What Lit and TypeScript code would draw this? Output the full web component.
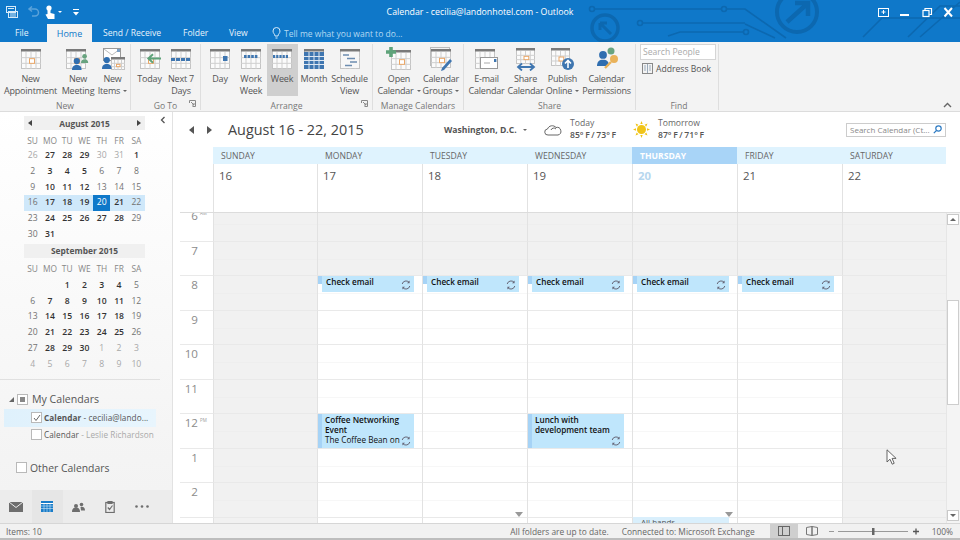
import { LitElement, html, css, svg, nothing } from "lit";
import { customElement } from "lit/decorators.js";

const G = "#7a7a7a";
const calBase = (orange = true, x = 0, y = 0, w = 20, h = 20) => {
  const cw = w / 4, rh = (h - 3) / 3;
  return svg`<g transform="translate(${x} ${y})">
    <rect x="0.5" y="0.5" width="${w - 1}" height="${h - 1}" fill="#fbfbfb" stroke="#c4c4c4"/>
    <rect x="0" y="0" width="${w}" height="2.5" fill="${G}"/>
    ${[1, 2, 3].map((i) => svg`<path d="M${i * cw} 3V${h}" stroke="#cfcfcf"/>`)}
    ${[1, 2].map((i) => svg`<path d="M0 ${3 + i * rh}H${w}" stroke="#cfcfcf"/>`)}
    ${orange ? svg`<rect x="${cw * 2 - 1.5}" y="${3 + rh + 1}" width="${cw}" height="${rh - 1}" fill="#fff" stroke="#eaa768"/>` : nothing}
  </g>`;
};
const person = (x: number, y: number, c: string, s = 1) => svg`<g transform="translate(${x} ${y}) scale(${s})" fill="${c}"><circle cx="4" cy="2.6" r="2.6"/><path d="M0 10c0-3 1.5-4.2 4-4.2S8 7 8 10z"/></g>`;
const weekBars = (x: number, y: number, n: number, w: number) => svg`${Array.from({ length: n }, (_, i) => svg`<rect x="${x + i * (w + 1)}" y="${y}" width="${w}" height="3" fill="#3f76b0"/>`)}`;
const wrap = (c: unknown, w = 30, h = 24) => html`<svg width="${w}" height="${h}" viewBox="0 0 ${w} ${h}">${c}</svg>`;

const icons: Record<string, unknown> = {
  appt: wrap(svg`${calBase(true, 5, 2)}`),
  meeting: wrap(svg`${calBase(true, 3, 2)}${person(18, 7, "#68a37f", 0.9)}${person(9, 11, "#2f6eb0", 1.2)}`),
  items: wrap(svg`<rect x="5.5" y="1.5" width="17" height="12" fill="#fff" stroke="#999"/><path d="M6 2l8 6 8-6" fill="none" stroke="#bbb"/><rect x="19" y="2" width="3" height="3" fill="#7b9fc4"/>${calBase(true, 13, 10, 14, 13)}${person(4, 10, "#2f6eb0", 1.2)}`),
  today: wrap(svg`${calBase(true, 5, 2)}<path d="M26 11.5H14m4-4.2l-4.6 4.2 4.6 4.2" fill="none" stroke="#5fa37a" stroke-width="2"/>`),
  next7: wrap(svg`${calBase(false, 5, 2)}${weekBars(5, 11, 4, 4)}`),
  day: wrap(svg`${calBase(false, 5, 2)}<rect x="18" y="9" width="4.5" height="5" fill="#3f76b0"/>`),
  work: wrap(svg`${calBase(false, 5, 2)}${weekBars(8, 8, 4, 2.6)}`),
  week: wrap(svg`${calBase(false, 5, 2)}${weekBars(6, 8, 5, 2.2)}`),
  month: wrap(svg`${calBase(false, 5, 2)}<g fill="#3f76b0"><rect x="5" y="5" width="20" height="17"/></g><path d="M5 9.5H25M5 13.5H25M5 17.5H25M10 5V22M15 5V22M20 5V22" stroke="#dfe8f2"/>`),
  sched: wrap(svg`${calBase(false, 5, 2)}<rect x="6" y="5" width="18" height="16" fill="#f7f7f7"/><path d="M8 8h6M12 11.5h8M15 15h7M10 18.5h7" stroke="#6d8db0" stroke-width="1.4"/>`),
  open: wrap(svg`${calBase(true, 7, 3)}<path d="M7 0v10M2 5h10" stroke="#5fa37a" stroke-width="3.6"/>`),
  groups: wrap(svg`<rect x="4.5" y="0.5" width="19" height="18" fill="#f1f1f1" stroke="#bbb"/>${calBase(true, 5, 2, 20, 19)}<path d="M16 21l8-9 2 2-8 9-3 1z" fill="#3f76b0"/>`),
  email: wrap(svg`${calBase(false, 3, 2)}<rect x="8.5" y="10.5" width="17" height="11" fill="#fff" stroke="#999"/><path d="M12 16h6" stroke="#aaa"/><rect x="22" y="12" width="2.4" height="3" fill="#3f76b0"/>`),
  share: wrap(svg`${calBase(true, 5, 1, 19, 16)}<path d="M7 20h16M11 16.5L7 20l4 3.5M19 16.5l4 3.5-4 3.5" fill="none" stroke="#3f76b0" stroke-width="1.8"/>`),
  publish: wrap(svg`${calBase(true, 3, 1, 19, 18)}<circle cx="20" cy="17" r="6" fill="#3f76b0"/><path d="M20 21v-7M17 16.5l3-3 3 3" fill="none" stroke="#fff" stroke-width="1.6"/>`),
  perms: wrap(svg`<circle cx="19" cy="4" r="3.5" fill="#68a37f"/>${person(5, 4, "#2f6eb0", 1.5)}<path d="M13 21l6-6" stroke="#e9b25a" stroke-width="2.4"/><circle cx="22" cy="12" r="4" fill="#e9b25a"/>`),
};

const btn = (ic: string, a: string, b: string, w: number, opts: { caret?: boolean; on?: boolean } = {}) => ({ ic, a, b, w, ...opts });
const groups = [
  { label: "New", w: 131, launcher: false, items: [btn("appt", "New", "Appointment", 60), btn("meeting", "New", "Meeting", 35), btn("items", "New", "Items", 34, { caret: true })] },
  { label: "Go To", w: 70, launcher: true, items: [btn("today", "Today", "", 31), btn("next7", "Next 7", "Days", 32)] },
  { label: "Arrange", w: 172, launcher: true, items: [btn("day", "Day", "", 31), btn("work", "Work", "Week", 31), btn("week", "Week", "", 31, { on: true }), btn("month", "Month", "", 33), btn("sched", "Schedule", "View", 38)] },
  { label: "Manage Calendars", w: 91, launcher: false, items: [btn("open", "Open", "Calendar", 46, { caret: true }), btn("groups", "Calendar", "Groups", 38, { caret: true })] },
  { label: "Share", w: 172, launcher: false, items: [btn("email", "E-mail", "Calendar", 40), btn("share", "Share", "Calendar", 38), btn("publish", "Publish", "Online", 36, { caret: true }), btn("perms", "Calendar", "Permissions", 52)] },
];

const sync = (c = "#667") => html`<svg class="sync" width="10" height="10" viewBox="0 0 10 10"><path d="M1.2 4A4 4 0 0 1 8 2.2M8.8 6A4 4 0 0 1 2 7.8" fill="none" stroke="${c}" stroke-width="1"/><path d="M8.6 .6v2.6H6zM1.4 9.4V6.8H4z" fill="${c}"/></svg>`;

const aug = [[26,27,28,29,30,31,1],[2,3,4,5,6,7,8],[9,10,11,12,13,14,15],[16,17,18,19,20,21,22],[23,24,25,26,27,28,29],[30,31,0,0,0,0,0]];
const sep = [[0,0,1,2,3,4,5],[6,7,8,9,10,11,12],[13,14,15,16,17,18,19],[20,21,22,23,24,25,26],[27,28,29,30,1,2,3],[4,5,6,7,8,9,10]];
const augBold = new Set(["0:1","0:2","0:3","0:6","1:1","1:2","1:3","2:1","2:2","2:3","3:1","3:2","3:3","3:5","4:1","4:2","4:3","4:4","4:5","5:1"]);
const sepBold = new Set(["0:2","0:3","0:4","0:5","1:1","1:2","1:3","1:4","1:5","2:1","2:2","2:3","2:4","2:5","3:1","3:2","3:3","3:4","3:5","4:1","4:2","4:3"]);
const augLight = new Set(["0:0","0:4","0:5"]);
const sepLight = new Set(["4:4","4:5","4:6","5:0","5:1","5:2","5:3","5:4","5:5","5:6"]);
const hdr = ["SU","MO","TU","WE","TH","FR","SA"];
const days = ["SUNDAY","MONDAY","TUESDAY","WEDNESDAY","THURSDAY","FRIDAY","SATURDAY"];
const hours = [["6","AM"],["7",""],["8",""],["9",""],["10",""],["11",""],["12","PM"],["1",""],["2",""],["3",""]];

@customElement("app-root")
export class AppRoot extends LitElement {
  static styles = css`
    :host { display: block; width: 960px; height: 540px; overflow: hidden; font-family: "Open Sans", "Noto Sans", sans-serif; color: #444; background: #fff; }
    .app { position: relative; width: 960px; height: 540px; display: flex; flex-direction: column; }
    .cursor { position: absolute; left: 886px; top: 449px; z-index: 5; }
    .top { position: relative; height: 42px; background: #0f78c9; flex: none; color: #fff; }
    .circuit { position: absolute; inset: 0; }
    .tbar { position: relative; height: 24px; display: grid; grid-template-columns: 1fr auto 1fr; align-items: center; font-size: 8.8px; }
    .qat { display: flex; align-items: center; padding-left: 5px; gap: 4px; }
    .qat .undo { margin-left: 3px; }
    .qat .c1 { border-top-color: #fff; margin-left: -2px; }
    .qat .gap { width: 3px; }
    .win { display: flex; justify-content: flex-end; align-items: center; gap: 8px; padding-right: 5px; }
    .win .m1 { margin-left: 1px; }
    .tabs { position: relative; height: 18px; display: flex; font-size: 8.6px; align-items: center; white-space: nowrap; }
    .tab { height: 18px; line-height: 19px; color: #e8f3fb; }
    .tab.file { width: 32px; padding-left: 15px; box-sizing: border-box; }
    .tab.active { background: #f3f3f3; color: #0f78c9; width: 45px; margin-left: 15px; text-align: center; font-size: 9px; }
    .tab.sr { margin-left: 11px; width: 58px; }
    .tab.fo { margin-left: 22px; width: 25px; }
    .tab.vi { margin-left: 21px; width: 19px; }
    .tell { color: #b4d8f2; margin-left: 24px; display: flex; align-items: center; gap: 3px; font-size: 8.5px; }
    .ribbon { flex: none; display: flex; background: #f3f3f3; border-bottom: 1px solid #dcdcdc; position: relative; box-sizing: border-box; height: 70px; padding-top: 2px; }
    .grp { display: flex; flex-direction: column; border-right: 1px solid #dedede; height: 66px; box-sizing: border-box; position: relative; flex: none; }
    .row { display: flex; height: 52px; justify-content: center; flex: none; }
    .rb { display: flex; flex-direction: column; align-items: center; font-size: 9px; letter-spacing: -.2px; line-height: 12px; color: #555; height: 52px; flex: none; white-space: nowrap; }
    .rb.on { background: #cfcfcf; }
    .rb svg { margin: 3px 0 2px; flex: none; }
    .rb span { height: 12px; display: block; }
    .caret { display: inline-block; width: 0; height: 0; border: 2px solid transparent; border-top: 2.5px solid #666; border-bottom: 0; margin-left: 3px; vertical-align: 2px; }
    .glabel { font-size: 8.6px; color: #777; text-align: center; margin-top: 4px; line-height: 12px; flex: none; white-space: nowrap; }
    .launch { position: absolute; right: 4px; bottom: 3px; }
    .find { width: 83px; padding-left: 4px; box-sizing: border-box; }
    .sp { width: 76px; height: 16px; background: #fff; border: 1px solid #d5d5d5; box-sizing: border-box; font-size: 8.6px; color: #aaa; padding-left: 2px; line-height: 14px; }
    .ab { display: flex; align-items: center; gap: 2px; font-size: 8.6px; margin: 0 0 0 2px; color: #555; height: 17px; }
    .find .body { height: 52px; flex: none; }
    .collapse { position: absolute; right: 8px; bottom: 2px; }
    .main { flex: 1; display: flex; min-height: 0; }
    .side { width: 173px; flex: none; box-sizing: border-box; border-right: 1px solid #e2e2e2; background: linear-gradient(#fff, #f2f2f2); display: flex; flex-direction: column; position: relative; }
    .sidechev { position: absolute; left: 160px; top: 4px; }
    .mini { margin: 4px 0 0 24px; width: 121px; }
    .mh { height: 14px; background: #f0f0f0; display: flex; justify-content: space-between; align-items: center; font-size: 8.4px; font-weight: 700; color: #555; padding: 0 4px; box-sizing: border-box; }
    .mh b { flex: 1; text-align: center; font-weight: 700; }
    .tri { width: 0; height: 0; border: 3px solid transparent; }
    .tri.l { border-right: 4px solid #444; border-left: 0; }
    .tri.r { border-left: 4px solid #444; border-right: 0; }
    .mg { display: grid; grid-template-columns: repeat(7, 1fr); font-size: 8.6px; text-align: center; color: #727272; }
    .mg.dow { height: 17px; line-height: 21px; color: #888; font-size: 8.4px; margin-bottom: 1px; }
    .mg.wk { height: 15.8px; line-height: 15.8px; }
    .mg.wk.hl { background: #cfe8fa; }
    .mg b { color: #333; font-weight: 600; }
    .mg i { font-style: normal; color: #a8a8a8; }
    .mg .sel { background: #0f78c9; color: #fff; }
    .sep2 { margin-top: 1px; }
    .sep2 .mg.dow { margin-bottom: 3px; }
    .divi { border-top: 1px solid #e0e0e0; margin: 6px 12px 0 0; }
    .cals { margin-top: 11px; font-size: 10.6px; color: #555; flex: 1; }
    .ch { display: flex; align-items: center; height: 17px; }
    .ch .nm { margin-left: 4px; }
    .exp { width: 0; height: 0; border-left: 5px solid transparent; border-bottom: 5px solid #666; margin: 0 3px 0 9px; }
    .cb { width: 9px; height: 9px; border: 1px solid #b9b9b9; background: #fff; flex: none; display: flex; align-items: center; justify-content: center; }
    .cb.mix::after { content: ""; width: 5px; height: 5px; background: #888; }
    .citem { display: flex; align-items: center; height: 18px; margin-left: 4px; width: 152px; padding-left: 27px; box-sizing: border-box; font-size: 8.2px; letter-spacing: .08px; color: #555; gap: 2px; white-space: nowrap; }
    .citem.on { background: linear-gradient(90deg, #dff1fc, #e8f5fd); margin-top: 1px; }
    .citem.off { margin-top: -1px; }
    .citem b { font-weight: 700; }
    .citem .c2 { font-weight: 400; }
    .citem em { font-style: normal; color: #a9a9a9; }
    .other { display: flex; align-items: center; gap: 3px; margin: 17px 0 0 16px; font-size: 10.4px; }
    .nav { height: 33px; background: #ececec; display: flex; align-items: center; flex: none; }
    .nb { width: 31.5px; height: 33px; display: flex; align-items: center; justify-content: center; flex: none; }
    .nb.on { background: #e6e6e6; }
    .cal { flex: 1; display: flex; min-width: 0; padding-left: 7px; }
    .calin { flex: 1; min-width: 0; display: flex; flex-direction: column; }
    .chead { height: 35px; flex: none; display: flex; align-items: center; }
    .arrows { display: flex; gap: 13px; margin: 0 16px 0 9px; align-items: center; }
    .arrows .tri { border-width: 4px; }
    .arrows .tri.l { border-right: 5px solid #555; border-left: 0; }
    .arrows .tri.r { border-left: 5px solid #555; border-right: 0; }
    .ttl { font-size: 14.4px; color: #444; width: 216px; white-space: nowrap; }
    .loc { font-size: 8.6px; font-weight: 700; color: #555; width: 100px; white-space: nowrap; display: flex; align-items: center; }
    .loc .caret { margin-left: 6px; vertical-align: 0; }
    .wx { display: flex; align-items: center; gap: 8px; width: 89px; font-size: 8.6px; line-height: 11.5px; color: #666; white-space: nowrap; flex: none; }
    .wx.tm2 { width: 213px; }
    .wx b { display: block; font-weight: 600; color: #555; word-spacing: -.6px; }
    .search { width: 100px; height: 14px; border: 1px solid #ccc; box-sizing: border-box; font-size: 8px; color: #888; display: flex; align-items: center; justify-content: space-between; padding: 0 3px; white-space: nowrap; flex: none; }
    .wk7 { display: grid; grid-template-columns: 33px 104px repeat(5, 105px) 104px; flex: none; }
    .dn { background: #dff3fe; height: 17px; font-size: 8.6px; line-height: 18px; padding-left: 8px; color: #666; }
    .dn.today { background: #a8d4f7; color: #fff; font-weight: 700; }
    .dd { height: 48px; font-size: 11.4px; padding: 4px 0 0 5px; box-sizing: border-box; border-left: 1px solid #e2e2e2; color: #555; }
    .dd.today { color: #b7d7ee; font-weight: 700; }
    .blank { background: transparent; }
    .bodywrap { flex: 1; min-height: 0; display: flex; border-top: 1px solid #dcdcdc; box-sizing: border-box; }
    .port { flex: 1; min-width: 0; overflow: hidden; position: relative; }
    .inner { margin-top: -6px; }
    .hr { display: grid; grid-template-columns: 33px 104px repeat(5, 105px) 104px; height: 34.5px; }
    .tm { font-size: 11.6px; color: #8c8c8c; border-bottom: 1px solid #e9e9e9; text-align: right; position: relative; box-sizing: border-box; padding: 1px 15px 0 0; line-height: 15px; }
    .tm sup { position: absolute; left: 20px; top: 3px; font-size: 4.5px; line-height: 6px; color: #999; }
    .cell { position: relative; box-sizing: border-box; border-left: 1px solid #e2e2e2; border-bottom: 1px solid #e9e9e9; background: #fff; }
    .cell.off { background: #f1f1f1; }
    .cell::after { content: ""; position: absolute; left: 0; right: 0; top: 17px; border-top: 1px solid #f7f7f7; }
    .cell.off::after { border-top-color: #eeeeee; }
    .ev { position: absolute; z-index: 1; left: 0; top: 0; width: 96px; background: #bfe6fc; box-sizing: border-box; font-size: 8.2px; line-height: 10px; color: #111; font-weight: 600; }
    .ev::before { content: ""; position: absolute; left: 0; top: 0; bottom: 0; width: 4px; background: #a6d3f6; }
    .ev.mail { height: 16px; padding: 1px 0 0 8px; background: linear-gradient(90deg, transparent 4px, #bfe6fc 4px); }
    .ev.mail::before { bottom: 8px; }
    .ev.tall { height: 34px; padding: 1px 0 0 7px; }
    .ev .loc2 { font-weight: 400; display: block; white-space: nowrap; }
    .sync { position: absolute; right: 3px; bottom: 2px; }
    .sliver { position: absolute; z-index: 1; left: 0; top: 34px; width: 96px; height: 10px; background: #d9effc; font-size: 8px; line-height: 9px; padding-left: 8px; box-sizing: border-box; color: #555; }
    .dtri { position: absolute; z-index: 2; width: 0; height: 0; border: 4px solid transparent; border-top: 5px solid #999; border-bottom: 0; right: 4px; top: 28.5px; }
    .scroll { width: 14px; flex: none; background: #f4f4f4; border-left: 1px solid #e6e6e6; box-sizing: border-box; display: flex; flex-direction: column; }
    .sb { height: 11px; background: #fff; border: 1px solid #c9c9c9; box-sizing: border-box; margin: 1px 1px 0 0; display: flex; align-items: center; justify-content: center; flex: none; }
    .sb.dn2 { margin: 0 1px 2px 0; }
    .tup { border: 3px solid transparent; border-bottom: 3px solid #666; border-top: 0; width: 0; height: 0; }
    .tdn { border: 3px solid transparent; border-top: 3px solid #666; border-bottom: 0; width: 0; height: 0; }
    .thumb { height: 105px; background: #fff; border: 1px solid #cdcdcd; box-sizing: border-box; margin: 75px 1px 0 0; flex: none; }
    .sf { flex: 1; }
    .status { flex: none; background: #f1f1f1; border-top: 1px solid #d6d6d6; border-bottom: 2px solid #bdbdbd; display: flex; align-items: center; font-size: 8.4px; color: #666; white-space: nowrap; height: 14px; }
    .status .fill { flex: 1; padding-left: 6px; }
    .vb { width: 28px; height: 14px; display: flex; align-items: center; justify-content: center; flex: none; }
    .vb.on { background: #cfcfcf; }
    .conn { margin: 0 15px 0 13px; }
    .zoom { display: flex; align-items: center; margin-left: 2px; }
    .pct { margin: 0 7px 0 12px; }
  `;

  private miniCal(title: string, weeks: number[][], bold: Set<string>, light: Set<string>, arrows: boolean, hl: number) {
    return html`
      <div class="mh">${arrows ? html`<span class="tri l"></span>` : nothing}<b>${title}</b>${arrows ? html`<span class="tri r"></span>` : nothing}</div>
      <div class="mg dow">${hdr.map((d) => html`<span>${d}</span>`)}</div>
      ${weeks.map((w, r) => html`<div class="mg wk ${r === hl ? "hl" : ""}">
        ${w.map((d, c) => {
          const k = `${r}:${c}`;
          if (!d) return html`<span></span>`;
          if (hl === r && d === 20) return html`<span class="sel">${d}</span>`;
          if (bold.has(k)) return html`<b>${d}</b>`;
          if (light.has(k)) return html`<i>${d}</i>`;
          return html`<span>${d}</span>`;
        })}
      </div>`)}
    `;
  }

  private event(h: number, d: number) {
    if (h === 2 && d >= 1 && d <= 5) return html`<div class="ev mail">Check email${sync()}</div>`;
    if (h === 6 && d === 1) return html`<div class="ev tall">Coffee Networking Event<span class="loc2">The Coffee Bean on</span>${sync()}</div>`;
    if (h === 6 && d === 3) return html`<div class="ev tall">Lunch with development team${sync()}</div>`;
    if (h === 8 && d === 2) return html`<span class="dtri"></span>`;
    if (h === 8 && d === 4) return html`<span class="dtri"></span><div class="sliver">All hands</div>`;
    return nothing;
  }

  render() {
    return html`<div class="app">
      <div class="top">
        <svg class="circuit" width="960" height="42" viewBox="0 0 960 42" fill="none" stroke="#0c68b0" stroke-width="1.6">
          <circle cx="592" cy="9" r="2.5"/><path d="M594 9H722"/><circle cx="724" cy="9" r="2.5"/><path d="M727 9H745L786 38"/>
          <circle cx="640" cy="23" r="2.5"/><path d="M643 23H745"/><path d="M745 24L775 38"/>
          <path d="M668 36L680 32H743"/><circle cx="746" cy="32" r="2.5"/>
          <circle cx="605" cy="28" r="13" stroke-width="3.5"/><path d="M600 23h7M600 23v7M600 23l11 11" stroke-width="3"/>
          <circle cx="797" cy="12" r="20" stroke-width="4"/><path d="M787 22L807 4M795 3H808V16" stroke-width="4.5"/>
          <path d="M863 37L882 18H960M908 37L940 6H960M920 37L960 2"/>
        </svg>
        <div class="tbar">
          <div class="qat">
            <svg width="14" height="14" viewBox="0 0 14 14" fill="none" stroke="#d7ebf9"><rect x="1.5" y="1.5" width="9" height="6"/><rect x="3.5" y="6.5" width="9" height="6"/><path d="M5 9h6M5 11h6M3 3.5h6"/></svg>
            <svg class="undo" width="14" height="12" viewBox="0 0 14 12" fill="none" stroke="#5aa2da" stroke-width="1.5"><path d="M4 3h5a3 3 0 0 1 0 7H6M6 .5L3 3l3 2.500"/></svg>
            <svg width="12" height="15" viewBox="0 0 12 15" fill="#fff"><circle cx="5" cy="3" r="2.600"/><path d="M3.500 5h3v3l4 1v5H4L1.500 9.500 3.500 9z"/></svg>
            <span class="caret c1"></span>
            <span class="gap"></span>
            <svg width="6" height="7" viewBox="0 0 6 7" fill="#fff"><rect y="0" width="6" height="1"/><path d="M0 3h6L3 6.500z"/></svg>
          </div>
          <div>Calendar - cecilia@landonhotel.com - Outlook</div>
          <div class="win">
            <svg width="13" height="11" viewBox="0 0 13 11" fill="none" stroke="#fff"><rect x="1.500" y="1.500" width="10" height="8"/><path d="M6.500 3v4M4.500 5h4" /></svg>
            <svg class="m1" width="13" height="11" viewBox="0 0 13 11"><rect x="1" y="7" width="9" height="2" fill="#fff"/></svg>
            <svg class="m1" width="13" height="11" viewBox="0 0 13 11" fill="none" stroke="#fff" stroke-width="1.200"><rect x="2" y="3.500" width="6" height="6"/><path d="M4 3V1.500h6.500v6H8.500"/></svg>
            <svg width="13" height="11" viewBox="0 0 13 11" fill="none" stroke="#fff" stroke-width="2"><path d="M2.500 1l7.500 8.500M10 1L2.500 9.500"/></svg>
          </div>
        </div>
        <div class="tabs">
          <div class="tab file">File</div>
          <div class="tab active">Home</div>
          <div class="tab sr">Send / Receive</div>
          <div class="tab fo">Folder</div>
          <div class="tab vi">View</div>
          <div class="tell">
            <svg width="9" height="12" viewBox="0 0 9 12" fill="none" stroke="#d7ebf9"><path d="M3 9C3 7 1 6.500 1 4a3.500 3.500 0 0 1 7 0C8 6.500 6 7 6 9zM3.500 11h2"/></svg>
            Tell me what you want to do...
          </div>
        </div>
      </div>

      <div class="ribbon">
        ${groups.map((g) => html`<div class="grp" style="width:${g.w}px">
          <div class="row">
            ${g.items.map((b) => html`<div class="rb ${b.on ? "on" : ""}" style="width:${b.w}px">
              ${icons[b.ic]}
              <span>${b.a}</span>
              ${b.b ? html`<span>${b.b}${b.caret ? html`<i class="caret"></i>` : nothing}</span>` : nothing}
            </div>`)}
          </div>
          <div class="glabel">${g.label}</div>
          ${g.launcher ? html`<svg class="launch" width="7" height="7" viewBox="0 0 7 7" fill="none" stroke="#888"><path d="M.5 3V.5H6.500V6.500H3.500M2 2l3 3M5 3v2H3"/></svg>` : nothing}
        </div>`)}
        <div class="grp find">
          <div class="body">
            <div class="sp">Search People</div>
            <div class="ab">
              <svg width="12" height="11" viewBox="0 0 12 11" fill="none" stroke="#888"><rect x=".5" y=".5" width="10" height="10"/><path d="M5.500 1v9M2 3h2M2 5h2M2 7h2M7 3h2M7 5h2M7 7h2" stroke="#9ab"/></svg>
              Address Book
            </div>
          </div>
          <div class="glabel">Find</div>
        </div>
        <svg class="collapse" width="9" height="7" viewBox="0 0 9 7" fill="none" stroke="#666" stroke-width="1.400"><path d="M1 5l3.500-3.500L8 5"/></svg>
      </div>

      <div class="main">
        <aside class="side">
          <svg class="sidechev" width="6" height="8" viewBox="0 0 6 8" fill="none" stroke="#555" stroke-width="1.300"><path d="M4.500 1L1.500 4l3 3"/></svg>
          <div class="mini">
            ${this.miniCal("August 2015", aug, augBold, augLight, true, 3)}
            <div class="sep2">${this.miniCal("September 2015", sep, sepBold, sepLight, false, -1)}</div>
          </div>
          <div class="divi"></div>
          <div class="cals">
            <div class="ch"><span class="exp"></span><span class="cb mix"></span><span class="nm">My Calendars</span></div>
            <div class="citem on"><span class="cb"><svg width="8" height="8" viewBox="0 0 8 8" fill="none" stroke="#666"><path d="M1 4l2 2.500L7 1"/></svg></span><span><b>Calendar</b> <span class="c2">- cecilia@lando...</span></span></div>
            <div class="citem off"><span class="cb"></span><span><span>Calendar</span> <em>- Leslie Richardson</em></span></div>
            <div class="other"><span class="cb"></span>Other Calendars</div>
          </div>
          <div class="nav">
            <div class="nb"><svg width="14" height="10" viewBox="0 0 14 10"><rect width="14" height="10" fill="#6e6e6e"/><path d="M0 0l7 5.500L14 0" fill="none" stroke="#ececec"/></svg></div>
            <div class="nb on"><svg width="12" height="11" viewBox="0 0 12 11"><rect width="12" height="11" fill="#1a7cc8"/><path d="M0 2.500H12" stroke="#fff"/><path d="M0 5H12M0 7.500H12M3 3V11M6 3V11M9 3V11" stroke="#cfe6f7" stroke-width=".6"/></svg></div>
            <div class="nb"><svg width="13" height="10" viewBox="0 0 13 10" fill="#6e6e6e"><circle cx="4" cy="4" r="2"/><circle cx="9.500" cy="2.500" r="1.800"/><path d="M0 10c0-3 1.500-4.500 4-4.500S8 7 8 10zM8.500 5c2.500-.8 4.500.5 4.500 3.500H9z"/></svg></div>
            <div class="nb"><svg width="10" height="12" viewBox="0 0 10 12" fill="none" stroke="#6e6e6e" stroke-width="1.200"><rect x=".8" y="1.500" width="8.400" height="10"/><path d="M3 .5h4v2H3zM2.800 6.500l1.700 2 3-4"/></svg></div>
            <div class="nb"><svg width="14" height="3" viewBox="0 0 14 3" fill="#6e6e6e"><circle cx="1.500" cy="1.500" r="1.300"/><circle cx="7" cy="1.500" r="1.300"/><circle cx="12.500" cy="1.500" r="1.300"/></svg></div>
          </div>
        </aside>

        <section class="cal">
          <div class="calin">
            <div class="chead">
              <div class="arrows"><span class="tri l"></span><span class="tri r"></span></div>
              <div class="ttl">August 16 - 22, 2015</div>
              <div class="loc">Washington, D.C.<i class="caret"></i></div>
              <div class="wx">
                <svg width="18" height="12" viewBox="0 0 18 12" fill="none" stroke="#666"><path d="M4 11a3 3 0 0 1-.5-6A5 5 0 0 1 12 3.500 3.800 3.800 0 0 1 14 11zM7 6a3 3 0 0 1 5-1"/></svg>
                <div>Today<b>85° F / 73° F</b></div>
              </div>
              <div class="wx tm2">
                <svg width="17" height="17" viewBox="0 0 17 17" fill="#f0c419"><circle cx="8.500" cy="8.500" r="4.500"/><path d="M8.500 0l1.200 3h-2.400zM8.500 17l-1.200-3h2.400zM0 8.500l3-1.200v2.400zM17 8.500l-3 1.200V7.300zM2.500 2.500l3 1.200-1.800 1.800zM14.500 14.500l-3-1.200 1.800-1.800zM14.500 2.500l-1.200 3-1.800-1.800zM2.500 14.500l1.200-3 1.800 1.800z"/></svg>
                <div>Tomorrow<b>87° F / 71° F</b></div>
              </div>
              <div class="search"><span>Search Calendar (Ct...</span><svg width="9" height="9" viewBox="0 0 9 9" fill="none" stroke="#2b79c2" stroke-width="1.200"><circle cx="5.500" cy="3.500" r="2.700"/><path d="M3.500 5.500L.8 8.200"/></svg></div>
            </div>
            <div class="wk7">
              <span class="blank"></span>
              ${days.map((d, i) => html`<div class="dn ${i === 4 ? "today" : ""}">${d}</div>`)}
              <span class="blank"></span>
              ${[16, 17, 18, 19, 20, 21, 22].map((d, i) => html`<div class="dd ${i === 4 ? "today" : ""}">${d}</div>`)}
            </div>
            <div class="bodywrap">
              <div class="port">
                <div class="inner">
                  ${hours.map(([h, ap], hi) => html`<div class="hr">
                    <div class="tm">${h}${ap ? html`<sup>${ap}</sup>` : nothing}</div>
                    ${days.map((_, d) => html`<div class="cell ${hi < 2 || d === 0 || d === 6 ? "off" : ""}">${this.event(hi, d)}</div>`)}
                  </div>`)}
                </div>
              </div>
              <div class="scroll">
                <div class="sb"><span class="tup"></span></div>
                <div class="thumb"></div>
                <div class="sf"></div>
                <div class="sb dn2"><span class="tdn"></span></div>
              </div>
            </div>
          </div>
        </section>
      </div>

      <footer class="status">
        <div class="fill">Items: 10</div>
        <div>All folders are up to date.</div>
        <div class="conn">Connected to: Microsoft Exchange</div>
        <div class="vb on"><svg width="12" height="10" viewBox="0 0 12 10" fill="none" stroke="#666"><rect x=".5" y=".5" width="11" height="9"/><path d="M4.500 1v8"/></svg></div>
        <div class="vb"><svg width="12" height="10" viewBox="0 0 12 10" fill="none" stroke="#777"><path d="M.5 1.500l5.500-1v9l-5.500-1zM11.500 1.500L6 .5v9l5.500-1z"/></svg></div>
        <div class="zoom"><svg width="92" height="11" viewBox="0 0 92 11"><path d="M1 5.500h5M10 5.500H80" stroke="#999"/><rect x="44" y="2" width="2.500" height="7" fill="#666"/><path d="M85 5.500h6M88 2.500v6" stroke="#555" stroke-width="1.300"/></svg></div>
        <div class="pct">100%</div>
      </footer>
      <svg class="cursor" width="11" height="16" viewBox="0 0 11 16"><path d="M1 .8V13l3-2.800 2.200 5 2-.9-2.100-4.900h4z" fill="#fdfdfd" stroke="#555" stroke-width=".9"/></svg>
    </div>`;
  }
}
